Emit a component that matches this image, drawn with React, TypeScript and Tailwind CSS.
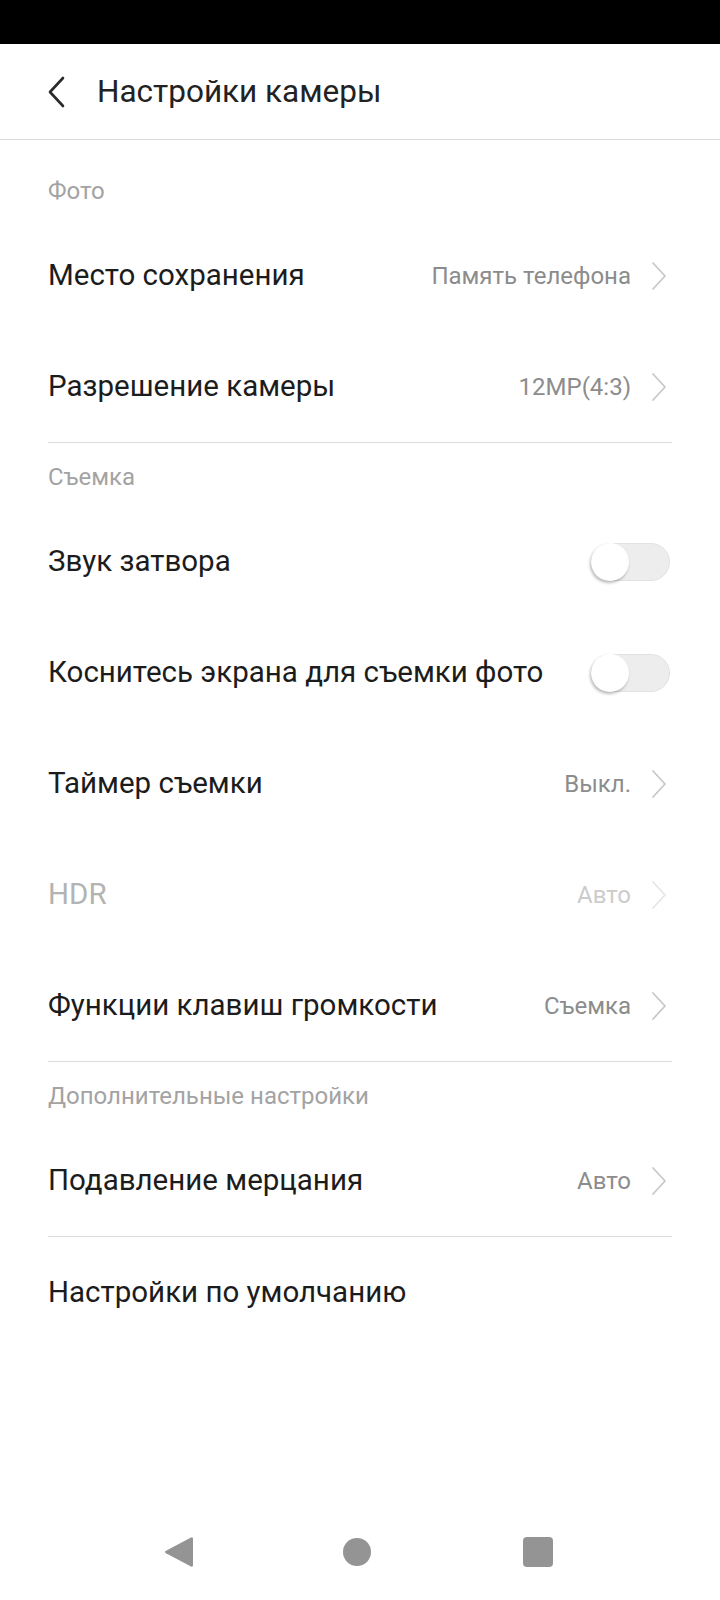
import React from "react";

type Row =
  | { kind: "link"; label: string; value?: string; disabled?: boolean }
  | { kind: "toggle"; label: string };

function Chevron({ disabled }: { disabled?: boolean }) {
  return (
    <svg width="18" height="30" viewBox="0 0 18 30" className="ml-[19px] shrink-0">
      <polyline
        points="3,2 15,15 3,28"
        fill="none"
        stroke={disabled ? "#e6e6e6" : "#c8c8c8"}
        strokeWidth="1.8"
        strokeLinecap="round"
        strokeLinejoin="round"
      />
    </svg>
  );
}

function Toggle() {
  return (
    <div className="flex h-[38px] w-[79px] items-center rounded-full border border-[#e2e2e2] bg-[#ededed]">
      <div className="h-[38px] w-[38px] -ml-px rounded-full bg-white shadow-[-1px_2px_3px_rgba(0,0,0,0.28)]" />
    </div>
  );
}

function SettingRow({ row }: { row: Row }) {
  const disabled = row.kind === "link" && row.disabled;
  return (
    <div className="flex h-[111px] items-center pl-[48px] pr-[52px]">
      <span
        className={`flex-1 text-[29.5px] leading-none ${
          disabled ? "text-[#b3b3b3]" : "text-[#1c1c1c]"
        }`}
      >
        {row.label}
      </span>
      {row.kind === "toggle" ? (
        <div className="-mr-[2px]">
          <Toggle />
        </div>
      ) : row.value ? (
        <div className="flex items-center">
          <span
            className={`text-[24px] leading-none ${
              disabled ? "text-[#cccccc]" : "text-[#8c8c8c]"
            }`}
          >
            {row.value}
          </span>
          <Chevron disabled={disabled} />
        </div>
      ) : null}
    </div>
  );
}

function SectionTitle({ title, first }: { title: string; first?: boolean }) {
  return (
    <div
      className={`px-[48px] pb-[17px] text-[24px] leading-[24px] text-[#a3a3a3] ${
        first ? "pt-[39px]" : "pt-[22px]"
      }`}
    >
      {title}
    </div>
  );
}

function Divider() {
  return <div className="mx-[48px] h-px bg-[#dcdcdc]" />;
}

export default function App() {
  return (
    <div className="flex h-[1600px] w-[720px] flex-col bg-white font-['Roboto',sans-serif]">
      {/* status bar */}
      <div className="h-[44px] bg-black" />

      {/* header */}
      <div className="flex h-[96px] items-center border-b border-[#dadada] pl-[48px]">
        <svg width="18" height="32" viewBox="0 0 18 32" className="shrink-0">
          <polyline
            points="15,2 2,16 15,30"
            fill="none"
            stroke="#2a2a2a"
            strokeWidth="2.6"
            strokeLinecap="round"
            strokeLinejoin="round"
          />
        </svg>
        <span className="ml-[31px] text-[31.5px] leading-none text-[#222222]">
          Настройки камеры
        </span>
      </div>

      <div className="flex-1">
        <SectionTitle title="Фото" first />
        <SettingRow row={{ kind: "link", label: "Место сохранения", value: "Память телефона" }} />
        <SettingRow row={{ kind: "link", label: "Разрешение камеры", value: "12MP(4:3)" }} />
        <Divider />

        <SectionTitle title="Съемка" />
        <SettingRow row={{ kind: "toggle", label: "Звук затвора" }} />
        <SettingRow row={{ kind: "toggle", label: "Коснитесь экрана для съемки фото" }} />
        <SettingRow row={{ kind: "link", label: "Таймер съемки", value: "Выкл." }} />
        <SettingRow row={{ kind: "link", label: "HDR", value: "Авто", disabled: true }} />
        <SettingRow row={{ kind: "link", label: "Функции клавиш громкости", value: "Съемка" }} />
        <Divider />

        <SectionTitle title="Дополнительные настройки" />
        <SettingRow row={{ kind: "link", label: "Подавление мерцания", value: "Авто" }} />
        <Divider />
        <SettingRow row={{ kind: "link", label: "Настройки по умолчанию" }} />
      </div>

      {/* navigation bar */}
      <div className="flex h-[96px] items-center justify-center gap-[148px]">
        <svg width="32" height="34" viewBox="0 0 32 34" className="-ml-[4px]">
          <path
            d="M28 2.5 Q30 1.5 30 4 V30 Q30 32.5 28 31.5 L3 18.2 Q1 17 3 15.8 Z"
            fill="#949494"
          />
        </svg>
        <div className="h-[28px] w-[28px] rounded-full bg-[#949494]" />
        <div className="ml-[4px] h-[30px] w-[30px] rounded-[4px] bg-[#949494]" />
      </div>
    </div>
  );
}
